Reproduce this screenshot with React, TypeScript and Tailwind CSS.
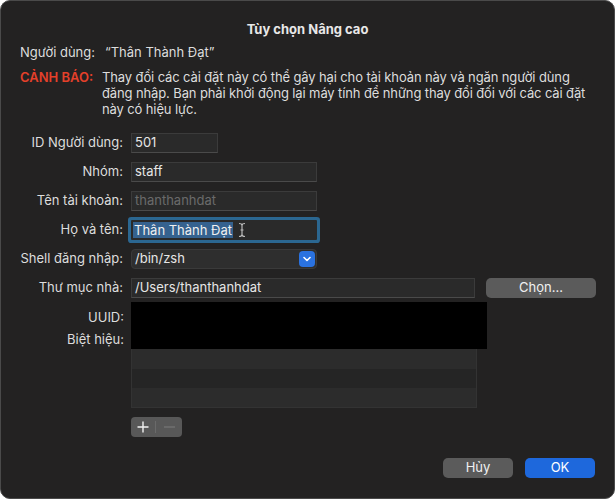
import React from "react";

function Label({ children }: { children: React.ReactNode }) {
  return <div className="w-[122px] shrink-0 text-right text-[13px] text-[#dddddd]">{children}</div>;
}

function Field({ w, children, dim }: { w: string; children?: React.ReactNode; dim?: boolean }) {
  return (
    <div
      className={`${w} h-[20px] border border-[#3b3b3b] border-b-[#4a4a4a] bg-[#2a2a2a] flex items-center pl-[3px] text-[13px] ${
        dim ? "text-[#6a6a6a]" : "text-[#e6e6e6]"
      }`}
    >
      {children}
    </div>
  );
}

export default function App() {
  return (
    <div
      className="w-[615px] h-[499px] bg-[#232222] rounded-[10px] border border-[#4a4a4a] overflow-hidden relative text-[#dddddd]"
      style={{ fontFamily: "Inter, 'Noto Sans', sans-serif" }}
    >
      <div className="pt-[20px] text-center text-[13px] font-bold leading-[16px] text-[#e8e8e8]">Tùy chọn Nâng cao</div>
      <div className="mt-[7px] flex text-[13px] leading-[16px] pl-[19px]">
        <span className="w-[85px]">Người dùng:</span>
        <span>“Thân Thành Đạt”</span>
      </div>
      <div className="mt-[9px] flex text-[13px] leading-[16px] pl-[19px]">
        <span className="w-[82px] shrink-0 text-[#e5402a] font-semibold">CẢNH BÁO:</span>
        <div className="flex flex-col whitespace-nowrap tracking-[-0.12px]">
          <span>Thay đổi các cài đặt này có thể gây hại cho tài khoản này và ngăn người dùng</span>
          <span>đăng nhập. Bạn phải khởi động lại máy tính để những thay đổi đối với các cài đặt</span>
          <span>này có hiệu lực.</span>
        </div>
      </div>

      <div className="mt-[11px] flex flex-col">
        <div className="h-[29px] flex items-center gap-[8px]">
          <Label>ID Người dùng:</Label>
          <Field w="w-[87px]">501</Field>
        </div>
        <div className="h-[29px] flex items-center gap-[8px]">
          <Label>Nhóm:</Label>
          <Field w="w-[186px]">staff</Field>
        </div>
        <div className="h-[29px] flex items-center gap-[8px]">
          <Label>Tên tài khoản:</Label>
          <Field w="w-[186px]" dim>
            thanthanhdat
          </Field>
        </div>
        <div className="h-[29px] flex items-center gap-[8px]">
          <Label>Họ và tên:</Label>
          <div className="w-[186px] h-[20px] bg-[#2a2a2a] flex items-center pl-[2px] text-[13px] text-[#f0f0f0] ring-[3px] ring-[#2b6791] rounded-[1px] relative">
            <span className="bg-[#35628f] px-[1px] leading-[16px]">Thân Thành Đạt</span>
            <svg className="absolute left-[107px] top-[2px]" width="8" height="16" viewBox="0 0 8 16">
              <path d="M1 1.5 Q4 1.5 4 3.5 Q4 1.5 7 1.5 M4 3.5 V12.5 M1 14.5 Q4 14.5 4 12.5 Q4 14.5 7 14.5 M2.5 8 H5.5" fill="none" stroke="#bbbbbb" strokeWidth="1.2" />
            </svg>
          </div>
        </div>
        <div className="h-[29px] flex items-center gap-[8px]">
          <Label>Shell đăng nhập:</Label>
          <div className="w-[186px] h-[20px] rounded-[4px] bg-[#2e2e2e] border border-[#3a3a3a] flex items-center pl-[3px] pr-[1px] text-[13px] text-[#e6e6e6]">
            <span className="flex-1">/bin/zsh</span>
            <div className="w-[16px] h-[16px] rounded-[4px] bg-[#2a72e0] flex items-center justify-center">
              <svg width="8" height="6" viewBox="0 0 8 6">
                <path d="M1 1.5 L4 4.5 L7 1.5" fill="none" stroke="white" strokeWidth="1.6" strokeLinecap="round" strokeLinejoin="round" />
              </svg>
            </div>
          </div>
        </div>
        <div className="h-[29px] flex items-center gap-[8px]">
          <Label>Thư mục nhà:</Label>
          <Field w="w-[344px]">/Users/thanthanhdat</Field>
          <div className="ml-[3px] w-[110px] h-[20px] rounded-[5px] bg-[#5b5b5b] flex items-center justify-center text-[13px] text-[#f0f0f0]">
            Chọn...
          </div>
        </div>

        <div className="flex gap-[7px]">
          <div className="w-[123px] shrink-0 flex flex-col items-end text-[13px]">
            <div className="mt-[7px] leading-[16px]">UUID:</div>
            <div className="mt-[6px] leading-[16px]">Biệt hiệu:</div>
          </div>
          <div className="flex flex-col">
            <div className="w-[356px] h-[47px] bg-black" />
            <div className="w-[346px] border-x border-b border-[#333333]">
              <div className="h-[20px] bg-[#2c2c2c]" />
              <div className="h-[19px] bg-[#252525]" />
              <div className="h-[19px] bg-[#2c2c2c]" />
            </div>
            <div className="mt-[9px] w-[51px] h-[20px] rounded-[4px] bg-[#585858] flex items-center">
              <div className="w-[24px] flex items-center justify-center">
                <svg width="12" height="12" viewBox="0 0 12 12">
                  <path d="M6 0.5 V11.5 M0.5 6 H11.5" stroke="#f2f2f2" strokeWidth="1.4" />
                </svg>
              </div>
              <div className="w-px h-[12px] bg-[#6a6a6a]" />
              <div className="flex-1 flex items-center justify-center">
                <svg width="11" height="2" viewBox="0 0 11 2">
                  <path d="M0 1 H11" stroke="#7c7c7c" strokeWidth="1.2" />
                </svg>
              </div>
            </div>
          </div>
        </div>

        <div className="mt-[21px] flex justify-end gap-[12px] pr-[19px]">
          <div className="w-[70px] h-[20px] rounded-[5px] bg-[#5b5b5b] flex items-center justify-center text-[13px] text-[#f0f0f0]">
            Hủy
          </div>
          <div className="w-[70px] h-[20px] rounded-[5px] bg-[#1e68dc] flex items-center justify-center text-[13px] text-white">
            OK
          </div>
        </div>
      </div>
    </div>
  );
}
